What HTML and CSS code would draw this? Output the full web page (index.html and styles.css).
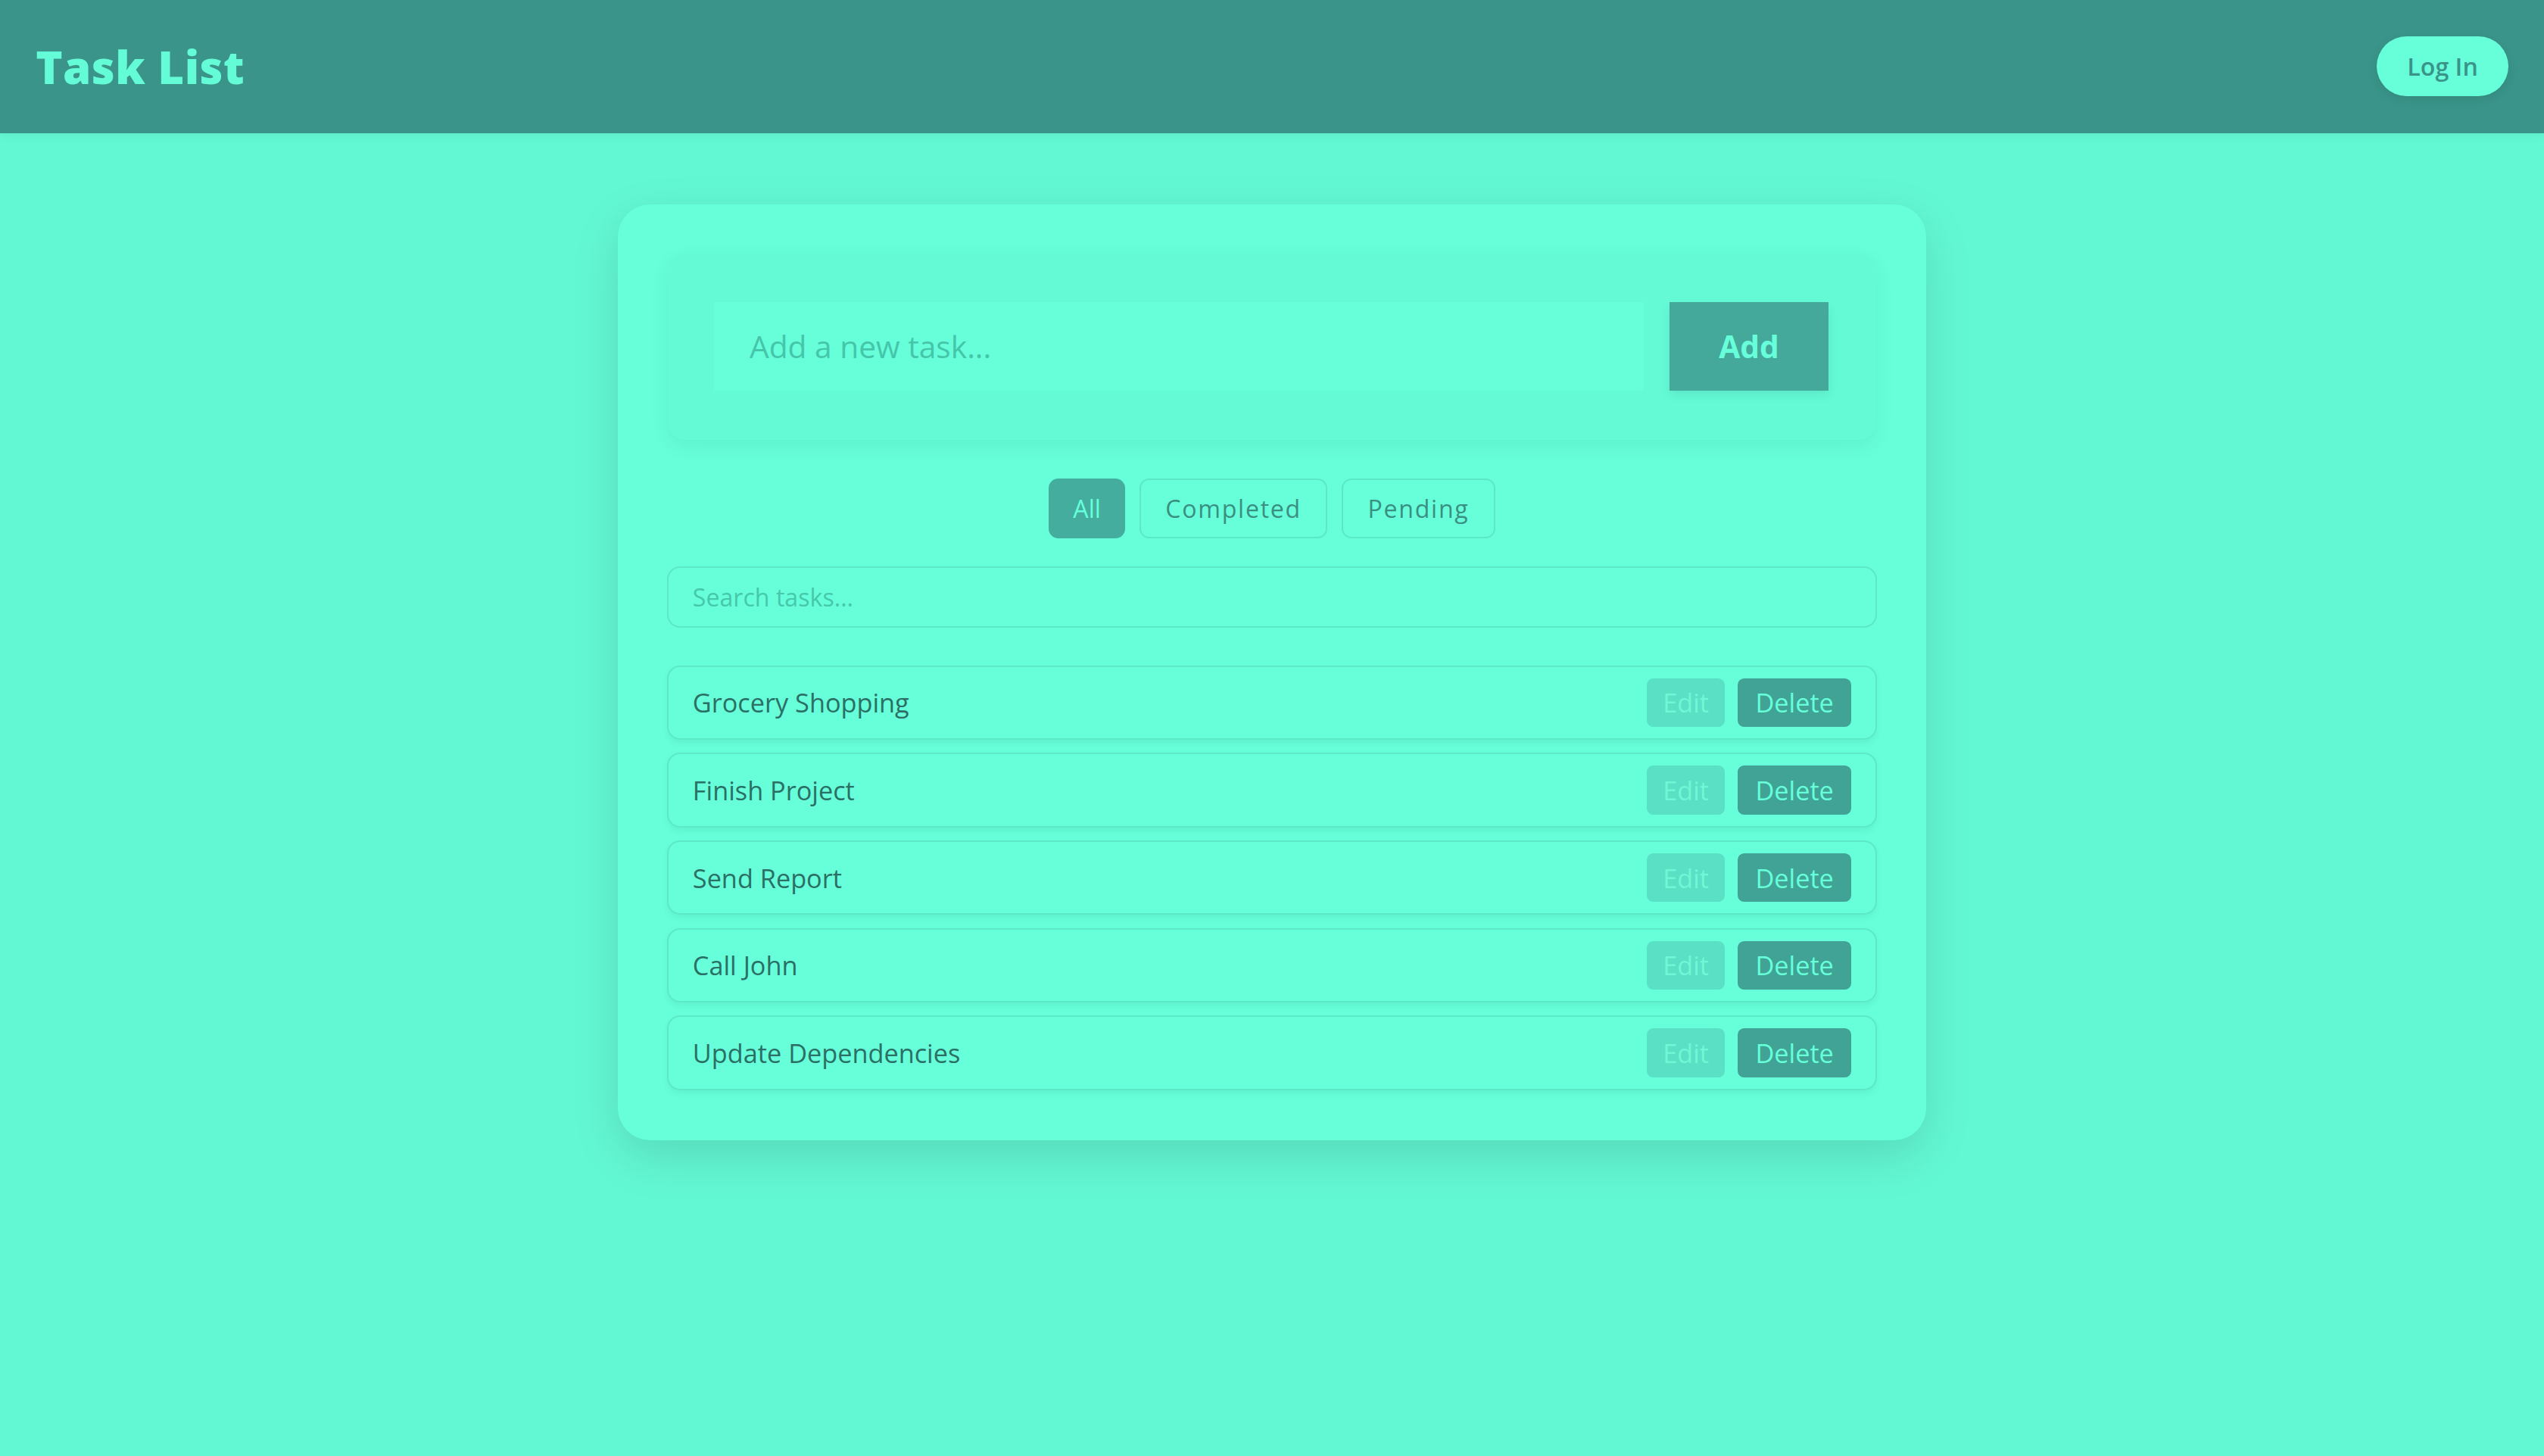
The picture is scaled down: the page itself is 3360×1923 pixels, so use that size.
FILE: index.html
```html
<!DOCTYPE html>
<html lang="en">
<head>
<meta charset="utf-8">
<title>Task List</title>
<link rel="stylesheet" href="styles.css">
</head>
<body>
<header class="topbar">
  <h1 class="brand">Task List</h1>
  <button class="login">Log In</button>
</header>
<main class="page">
  <section class="card">
    <form class="add-form">
      <input class="add-input" type="text" placeholder="Add a new task...">
      <button class="add-btn" type="button">Add</button>
    </form>
    <div class="filters">
      <button class="filter active">All</button>
      <button class="filter">Completed</button>
      <button class="filter">Pending</button>
    </div>
    <input class="search" type="text" placeholder="Search tasks...">
    <ul class="tasks">
      <li class="task"><span class="task-name">Grocery Shopping</span><span class="actions"><button class="edit">Edit</button><button class="delete">Delete</button></span></li>
      <li class="task"><span class="task-name">Finish Project</span><span class="actions"><button class="edit">Edit</button><button class="delete">Delete</button></span></li>
      <li class="task"><span class="task-name">Send Report</span><span class="actions"><button class="edit">Edit</button><button class="delete">Delete</button></span></li>
      <li class="task"><span class="task-name">Call John</span><span class="actions"><button class="edit">Edit</button><button class="delete">Delete</button></span></li>
      <li class="task"><span class="task-name">Update Dependencies</span><span class="actions"><button class="edit">Edit</button><button class="delete">Delete</button></span></li>
    </ul>
  </section>
</main>
</body>
</html>
```

FILE: styles.css
```css
html {
  zoom: 2.142857;
}
* {
  box-sizing: border-box;
}
body {
  margin: 0;
  min-height: 897px;
  background: #63f8d4;
  font-family: "Open Sans", "DejaVu Sans", sans-serif;
  color: #2b6f65;
}
button, input {
  font-family: inherit;
}
.topbar {
  height: 82px;
  background: #3a9489;
  display: flex;
  align-items: center;
  justify-content: space-between;
  padding: 0 22px;
  box-shadow: 0 2px 6px rgba(0,0,0,0.06);
}
.brand {
  margin: 0;
  font-size: 28px;
  font-weight: 800;
  color: #64fcd6;
  letter-spacing: 0.2px;
}
.login {
  height: 37px;
  width: 81px;
  border: none;
  border-radius: 19px;
  background: #66ffda;
  color: #3a9489;
  font-size: 15px;
  font-weight: 600;
  box-shadow: 0 2px 6px rgba(0,0,0,0.08);
}
.page {
  padding-top: 44px;
  display: flex;
  justify-content: center;
}
.card {
  width: 806px;
  background: #66ffda;
  border-radius: 20px;
  padding: 30px 30px 31px;
  box-shadow: 0 10px 30px rgba(0,0,0,0.12);
}
.add-form {
  display: flex;
  gap: 16px;
  margin: 0;
  padding: 30px 30px 30px 29px;
  background: #64fad6;
  border-radius: 12px;
  box-shadow: 0 4px 12px rgba(0,0,0,0.06);
}
.add-input {
  flex: 1;
  height: 55px;
  border: none;
  background: #66ffda;
  padding: 0 22px;
  font-size: 19px;
  color: #2b6f65;
  outline: none;
}
.add-input::placeholder {
  color: #45c6aa;
}
.add-btn {
  width: 98px;
  height: 55px;
  border: none;
  background: #44a89a;
  color: #66ffda;
  font-size: 19px;
  font-weight: 700;
  box-shadow: 0 3px 6px rgba(0,0,0,0.08);
}
.filters {
  display: flex;
  justify-content: center;
  gap: 9px;
  margin-top: 24px;
}
.filter {
  height: 37px;
  padding: 0 15px;
  border: 1px solid #5ce8c7;
  border-radius: 6px;
  background: transparent;
  color: #3a8f82;
  font-size: 15px;
  letter-spacing: 0.8px;
}
.filter.active {
  background: #44ad9d;
  border-color: #44ad9d;
  color: #66ffda;
  padding: 0 14px;
  letter-spacing: 0;
}
.search {
  display: block;
  width: 100%;
  height: 38px;
  margin-top: 17px;
  border: 1px solid #5de9c8;
  border-radius: 8px;
  background: transparent;
  padding: 0 15px;
  font-size: 15px;
  outline: none;
}
.search::placeholder {
  color: #46c8ab;
}
.tasks {
  list-style: none;
  margin: 23px 0 0;
  padding: 0;
  display: flex;
  flex-direction: column;
  gap: 8px;
}
.task {
  height: 46px;
  border: 1px solid #5de9c8;
  border-radius: 8px;
  padding: 0 15px;
  display: flex;
  align-items: center;
  justify-content: space-between;
  box-shadow: 0 2px 4px rgba(0,0,0,0.05);
}
.task-name {
  font-size: 16px;
  color: #2b6f65;
}
.actions {
  display: flex;
  gap: 8px;
}
.edit, .delete {
  height: 30px;
  border: none;
  border-radius: 4px;
  font-size: 16px;
  padding: 0;
}
.edit {
  width: 48px;
  background: #5ae0c4;
  color: #6ff7d6;
}
.delete {
  width: 70px;
  background: #40a395;
  color: #66ffda;
}
```
